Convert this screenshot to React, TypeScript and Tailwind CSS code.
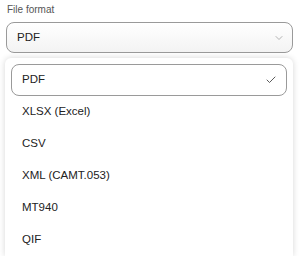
import { Check, ChevronDown } from "lucide-react";

const formats = ["PDF", "XLSX (Excel)", "CSV", "XML (CAMT.053)", "MT940", "QIF"];

export default function App() {
  const selected = "PDF";
  return (
    <div className="h-[256px] w-[300px] overflow-hidden bg-white font-['Liberation_Sans',Arial,sans-serif] text-[#222]">
      <div className="px-[6px] pt-[2px]">
        <label className="block pl-[1px] text-[10px] leading-[15px] text-[#555]">File format</label>
        <button className="mt-[5px] flex h-[31px] w-[287px] items-center justify-between rounded-[8px] border border-[#9a9a9a] bg-gradient-to-b from-white to-[#f3f3f3] pl-[10px] pr-[7px] text-[11.5px]">
          <span>{selected}</span>
          <ChevronDown size={12} strokeWidth={1.5} className="text-[#999]" />
        </button>
      </div>
      <div className="ml-[5px] mt-[5px] w-[288px] rounded-t-[6px] bg-white px-[6px] pt-[6px] shadow-[0_0_6px_rgba(0,0,0,0.16)]">
        {formats.map((f) => (
          <div
            key={f}
            className={
              f === selected
                ? "flex h-[32px] items-center justify-between rounded-[8px] border border-[#9a9a9a] pl-[10px] pr-[9px] text-[11.5px]"
                : "flex h-[32px] items-center pl-[11px] text-[11.5px]"
            }
          >
            <span>{f}</span>
            {f === selected && <Check size={12} strokeWidth={1.75} className="text-[#444]" />}
          </div>
        ))}
      </div>
    </div>
  );
}
